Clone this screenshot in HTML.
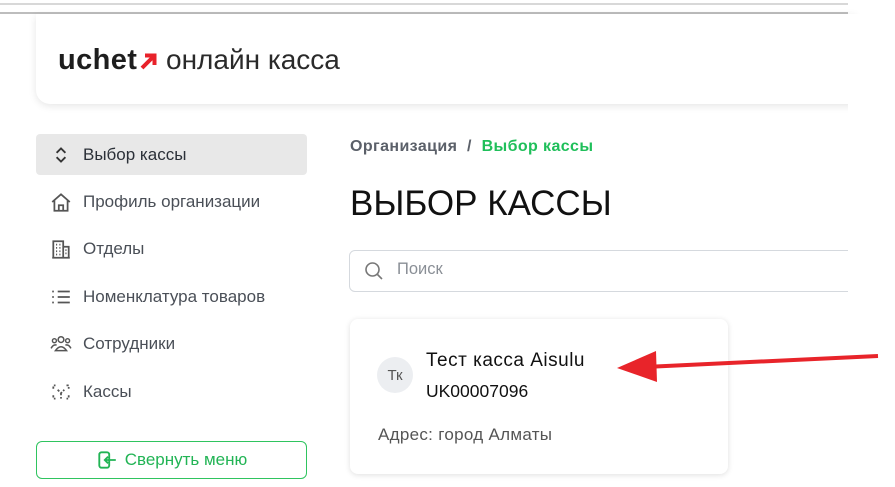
<!DOCTYPE html>
<html><head><meta charset="utf-8"><style>
*{margin:0;padding:0;box-sizing:border-box}
body{width:895px;height:487px;overflow:hidden;background:#fff;font-family:"Liberation Sans","Noto Sans CJK SC",sans-serif;position:relative;color:#222}
.abs{position:absolute}
.line{position:absolute;left:0;width:848px;height:2px;background:#d8d8d8}
.header{left:36px;top:14px;width:820px;height:90px;background:#fff;border-radius:0 0 0 14px;box-shadow:0 2px 8px rgba(0,0,0,.10)}
.logo{left:58px;top:44px;font-size:29px;font-weight:bold;color:#1e1e1e;letter-spacing:0.4px}
.logo2{left:166px;top:44px;font-size:28px;color:#2a2a2a}
.nav{left:36px;width:271px;height:41px;font-size:17px;color:#4a4f57;display:flex;align-items:center;padding-left:14px}
.nav svg{margin-right:11px}
.sel{background:#e8e8e8;border-radius:4px;color:#2b3038}
.btn{left:36px;top:441px;width:271px;height:38px;border:1.5px solid #2fc45f;border-radius:6px;color:#22b455;font-size:17px;display:flex;align-items:center;justify-content:center}
.crumb{left:350px;top:138px;font-size:16px;font-weight:bold;color:#5b6069;letter-spacing:0.4px}
.h1{left:350px;top:184px;font-size:35px;color:#111}
.search{left:349px;top:250px;width:520px;height:42px;border:1px solid #d5d9de;border-radius:6px}
.card{left:350px;top:319px;width:378px;height:155px;border-radius:8px;box-shadow:0 1px 6px rgba(0,0,0,.13);background:#fff}
</style></head><body>
<div class="line" style="top:3px"></div>
<div class="line" style="top:12px;background:#bdbdbd"></div>
<div class="abs header"></div>
<div class="abs" style="left:848px;top:14px;width:47px;height:473px;background:#fff"></div>
<div class="abs logo">uchet</div>
<svg class="abs" style="left:139px;top:51px" width="20" height="20" viewBox="0 0 20 20"><path d="M3 17 L15 5 M6 4.5 H15.5 V14" stroke="#e8222a" stroke-width="4" fill="none"/></svg>
<div class="abs logo2">онлайн касса</div>

<div class="abs nav sel" style="top:134px"><svg width="22" height="22" viewBox="0 0 20 20"><path d="M6 8 L10 4 L14 8 M6 12 L10 16 L14 12" stroke="#333" stroke-width="1.7" fill="none"/></svg>Выбор кассы</div>
<div class="abs nav" style="top:181px"><svg width="22" height="22" viewBox="0 0 20 20"><path d="M2 10 L10 3 L18 10 M4 8 V18 H16 V8 M8 18 V13 H12 V18" stroke="#555" stroke-width="1.6" fill="none"/></svg>Профиль организации</div>
<div class="abs nav" style="top:228px"><svg width="22" height="22" viewBox="0 0 20 20"><path d="M2 18 H18 M3 18 V3 H12 V18 M12 8 H17 V18 M5.5 6h1M8.5 6h1M5.5 9h1M8.5 9h1M5.5 12h1M8.5 12h1M5.5 15h1M8.5 15h1M14 11h1M14 14h1" stroke="#555" stroke-width="1.6" fill="none"/></svg>Отделы</div>
<div class="abs nav" style="top:276px"><svg width="22" height="22" viewBox="0 0 20 20"><path d="M2 5h1.5M2 10h1.5M2 15h1.5M7 5h11M7 10h11M7 15h11" stroke="#555" stroke-width="1.7" fill="none"/></svg>Номенклатура товаров</div>
<div class="abs nav" style="top:323px"><svg width="22" height="22" viewBox="0 0 20 20"><circle cx="10" cy="6" r="2.6" stroke="#555" stroke-width="1.4" fill="none"/><circle cx="4" cy="7" r="1.8" stroke="#555" stroke-width="1.3" fill="none"/><circle cx="16" cy="7" r="1.8" stroke="#555" stroke-width="1.3" fill="none"/><path d="M5 16 Q10 9 15 16 Z M1 14 Q3 10 6 11 M19 14 Q17 10 14 11" stroke="#555" stroke-width="1.4" fill="none"/></svg>Сотрудники</div>
<div class="abs nav" style="top:371px"><svg width="22" height="22" viewBox="0 0 20 20"><path d="M3 7 V4 H5 M15 4 H17 V7 M3 13 V16 H5 M17 13 V16 H15 M7 8 L10 11 L13 8 M10 11 V16" stroke="#555" stroke-width="1.6" fill="none" stroke-dasharray="2 1.5"/></svg>Кассы</div>
<div class="abs btn"><svg width="22" height="22" viewBox="0 0 20 20" style="margin-right:7px"><rect x="3" y="3" width="9" height="14" rx="2" stroke="#22b455" stroke-width="1.7" fill="none"/><path d="M8 10 H18 M11 7 L8 10 L11 13" stroke="#22b455" stroke-width="1.7" fill="none"/></svg>Свернуть меню</div>

<div class="abs crumb">Организация&nbsp; /&nbsp; <span style="color:#1fbf5a">Выбор кассы</span></div>
<div class="abs h1">ВЫБОР КАССЫ</div>
<div class="abs search"></div>
<div class="abs" style="left:848px;top:245px;width:47px;height:52px;background:#fff"></div>
<svg class="abs" style="left:364px;top:261px" width="20" height="20" viewBox="0 0 20 20"><circle cx="8.5" cy="8.5" r="6.5" stroke="#777" stroke-width="1.6" fill="none"/><path d="M13.5 13.5 L18 18" stroke="#777" stroke-width="1.6"/></svg>
<div class="abs" style="left:397px;top:260px;font-size:16.5px;color:#8a8f96">Поиск</div>

<div class="abs card"></div>
<div class="abs" style="left:377px;top:357px;width:36px;height:36px;border-radius:50%;background:#eceef1;color:#555;font-size:15px;display:flex;align-items:center;justify-content:center">Тк</div>
<div class="abs" style="left:426px;top:350px;font-size:19px;letter-spacing:0.5px;color:#111">Тест касса Aisulu</div>
<div class="abs" style="left:426px;top:381px;font-size:17.5px;color:#111">UK00007096</div>
<div class="abs" style="left:378px;top:425px;font-size:17px;letter-spacing:0.3px;color:#555">Адрес: город Алматы</div>

<svg class="abs" style="left:600px;top:335px" width="295" height="50" viewBox="0 0 295 50"><path d="M45 32 L278 21" stroke="#e8242a" stroke-width="4"/><path d="M56 16 L17 33 L57 47 Z" fill="#e8242a"/></svg>
</body></html>
